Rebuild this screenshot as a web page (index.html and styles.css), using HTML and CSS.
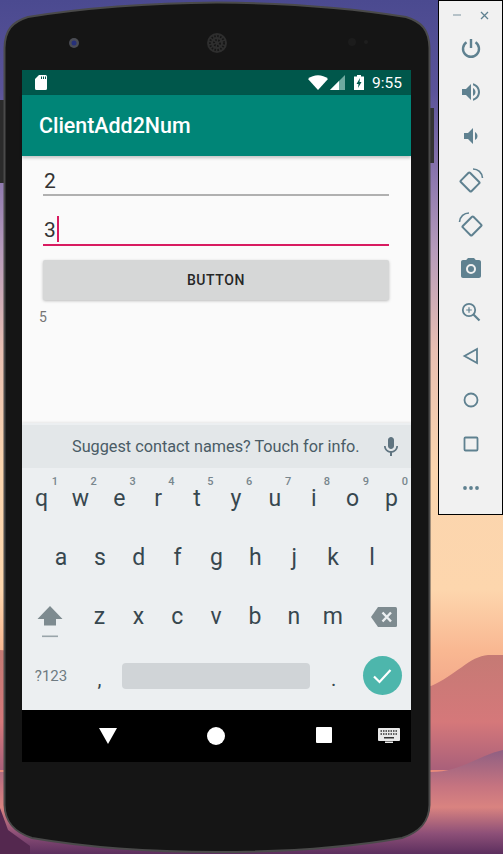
FILE: index.html
```html
<!DOCTYPE html>
<html lang="en">
<head>
    <meta charset="UTF-8">
    <meta name="viewport" content="width=device-width, initial-scale=1.0">
    <title>ClientAdd2Num</title>
    <link rel="stylesheet" href="styles.css">
</head>
<body>
    <div class="desktop">
        <!-- wallpaper hills -->
        <svg class="hills" width="503" height="854" viewBox="0 0 503 854">
            <defs>
                <linearGradient id="hillBack" x1="0" y1="0" x2="0" y2="1">
                    <stop offset="0" stop-color="#c47a74"/>
                    <stop offset="0.6" stop-color="#d5787a"/>
                    <stop offset="1" stop-color="#a9607a"/>
                </linearGradient>
                <linearGradient id="hillFront" x1="0" y1="0" x2="0" y2="1">
                    <stop offset="0" stop-color="#8f5f82"/>
                    <stop offset="0.35" stop-color="#c67480"/>
                    <stop offset="0.55" stop-color="#d98380"/>
                    <stop offset="0.8" stop-color="#8e5078"/>
                    <stop offset="1" stop-color="#5c2f5e"/>
                </linearGradient>
            </defs>
            <path d="M0 650 L0 770 L503 770 L503 655 L488 655 C470 656 455 676 431 686 Z" fill="url(#hillBack)"/>
            <path d="M0 772 L0 854 L503 854 L503 750 C480 755 460 772 431 772 Z" fill="url(#hillFront)"/>
            <path d="M0 808 L8 830 L30 846 L30 854 L0 854 Z" fill="#54284f"/>
        </svg>

        <!-- phone shell -->
        <div class="phone">
            <svg class="shell" width="440" height="854" viewBox="0 0 440 854">
                <rect x="0" y="100" width="6" height="83" fill="#2b2b2b"/>
                <rect x="428" y="108" width="6" height="55" fill="#333"/>
                <path d="M4.5 48 C5 30 12 22 28 17 C90 7 150 3 217 2.500 C285 3 345 7 406 17 C422 22 429 30 429.500 48 L429.500 805 C429 822 420 832 402 838 C345 848 285 852 217 852 C150 852 90 848 32 838 C14 832 5 822 4.500 805 Z" fill="#151515" stroke="#4a4a4a" stroke-width="2"/>
                <circle cx="74" cy="43" r="5" fill="#4a4c54"/>
                <circle cx="74" cy="43" r="2.500" fill="#26307a"/>
                <circle cx="217" cy="43" r="10" fill="#2e2e2e"/>
                <circle cx="217" cy="43" r="7" fill="none" stroke="#161616" stroke-width="2" stroke-dasharray="1.500 1.500"/>
                <circle cx="217" cy="43" r="3" fill="none" stroke="#161616" stroke-width="2" stroke-dasharray="1.500 1.500"/>
                <circle cx="352" cy="42" r="4" fill="#1c1c1c"/>
                <circle cx="366" cy="42" r="2" fill="#1e1e1e"/>
            </svg>

            <div class="screen">
                <div class="status-bar">
                    <svg class="sd-icon" width="12" height="15" viewBox="0 0 12 15">
                        <path d="M4 0 H10.500 A1.500 1.500 0 0 1 12 1.500 V13.500 A1.500 1.500 0 0 1 10.500 15 H1.500 A1.500 1.500 0 0 1 0 13.500 V4 Z M6 1.500 V4 H7 V1.500 Z M8 1.500 V4 H9 V1.500 Z M10 1.500 V4 H11 V1.500 Z" fill="#fff" fill-rule="evenodd"/>
                    </svg>
                    <div class="status-right">
                        <svg width="20" height="15" viewBox="0 0 20 15"><path d="M0 4 C5.500 -1 14.500 -1 20 4 L10 15 Z" fill="#fff"/></svg>
                        <svg class="signal" width="15" height="15" viewBox="0 0 15 15">
                            <path d="M15 0 V15 H0 Z" fill="#6fa9a0"/>
                            <path d="M9 6 V15 H0 Z" fill="#fff"/>
                        </svg>
                        <svg class="battery" width="10" height="15" viewBox="0 0 10 15">
                            <path d="M3 0 H7 V1.500 H10 V15 H0 V1.500 H3 Z" fill="#fff"/>
                            <path d="M6 3 L2.500 9 H4.500 L4 13 L7.500 7 H5.500 Z" fill="#00574b"/>
                        </svg>
                        <span class="clock">9:55</span>
                    </div>
                </div>
                <div class="app-bar">ClientAdd2Num</div>

                <div class="content">
                    <div class="field">2</div>
                    <div class="field field-active">3<span class="caret"></span></div>
                    <div class="btn">BUTTON</div>
                    <div class="result">5</div>
                </div>

                <div class="keyboard">
                    <div class="suggest">
                        <span class="suggest-text">Suggest contact names? Touch for info.</span>
                        <svg class="mic" width="24" height="24" viewBox="0 0 24 24">
                            <path d="M12 14c1.660 0 3-1.340 3-3V5c0-1.660-1.340-3-3-3S9 3.340 9 5v6c0 1.660 1.340 3 3 3zm5.300-3c0 3-2.540 5.100-5.300 5.100S6.700 14 6.700 11H5c0 3.410 2.720 6.230 6 6.720V21h2v-3.280c3.280-.480 6-3.300 6-6.720h-1.700z" fill="#5f7480"/>
                        </svg>
                    </div>
                    <div class="key-row key-row-top">
                        <div class="key"><sup class="hint">1</sup>q</div>
                        <div class="key"><sup class="hint">2</sup>w</div>
                        <div class="key"><sup class="hint">3</sup>e</div>
                        <div class="key"><sup class="hint">4</sup>r</div>
                        <div class="key"><sup class="hint">5</sup>t</div>
                        <div class="key"><sup class="hint">6</sup>y</div>
                        <div class="key"><sup class="hint">7</sup>u</div>
                        <div class="key"><sup class="hint">8</sup>i</div>
                        <div class="key"><sup class="hint">9</sup>o</div>
                        <div class="key"><sup class="hint">0</sup>p</div>
                    </div>
                    <div class="key-row key-row-mid">
                        <div class="key">a</div>
                        <div class="key">s</div>
                        <div class="key">d</div>
                        <div class="key">f</div>
                        <div class="key">g</div>
                        <div class="key">h</div>
                        <div class="key">j</div>
                        <div class="key">k</div>
                        <div class="key">l</div>
                    </div>
                    <div class="key-row">
                        <div class="key key-wide">
                            <svg class="shift-icon" width="26" height="32" viewBox="0 0 26 32">
                                <path d="M13 0 L25.500 13 H19 V19.500 H7 V13 H0.500 Z" fill="#7e8b90"/>
                                <rect x="5" y="29.500" width="16" height="1.600" fill="#9aa5aa"/>
                            </svg>
                        </div>
                        <div class="key">z</div>
                        <div class="key">x</div>
                        <div class="key">c</div>
                        <div class="key">v</div>
                        <div class="key">b</div>
                        <div class="key">n</div>
                        <div class="key">m</div>
                        <div class="key key-wide">
                            <svg class="del-icon" width="26" height="20" viewBox="0 0 26 20">
                                <path d="M7 0 H24.500 A1.500 1.500 0 0 1 26 1.500 V18.500 A1.500 1.500 0 0 1 24.500 20 H7 L0 10 Z" fill="#7e8b90"/>
                                <path d="M11.500 5.500 L20 14.500 M20 5.500 L11.500 14.500" stroke="#eceff1" stroke-width="2.400"/>
                            </svg>
                        </div>
                    </div>
                    <div class="key-row">
                        <div class="key key-wide key-symbols">?123</div>
                        <div class="key key-punct">,</div>
                        <div class="key-space"><div class="space-bar"></div></div>
                        <div class="key key-punct">.</div>
                        <div class="key key-wide">
                            <div class="done">
                                <svg width="20" height="16" viewBox="0 0 20 16"><path d="M2 8.500 L7.500 14 L18.500 2" fill="none" stroke="#fff" stroke-width="2.200"/></svg>
                            </div>
                        </div>
                    </div>
                </div>

                <div class="nav-bar">
                    <svg class="nav-back" width="18" height="16" viewBox="0 0 18 16"><path d="M0 0 H18 L9 16 Z" fill="#fff"/></svg>
                    <div class="nav-home"></div>
                    <div class="nav-recent"></div>
                    <svg class="nav-kbd" width="22" height="15" viewBox="0 0 22 15">
                        <rect width="22" height="13" rx="1" fill="#e8e8e8"/>
                        <path d="M2.500 3 H19.500 M2.500 6 H19.500" stroke="#333" stroke-width="1.400" stroke-dasharray="1.500 1"/>
                        <rect x="6" y="9" width="10" height="1.500" fill="#333"/>
                        <rect x="7" y="13.500" width="8" height="1.500" fill="#e8e8e8"/>
                    </svg>
                </div>
            </div>
        </div>

        <!-- emulator side toolbar -->
        <div class="toolbar">
            <div class="toolbar-head">
                <svg width="8" height="8" viewBox="0 0 8 8"><path d="M0 4 H8" stroke="#8fa3ad" stroke-width="1.200"/></svg>
                <svg width="9" height="9" viewBox="0 0 9 9"><path d="M1 1 L8 8 M8 1 L1 8" stroke="#5f8190" stroke-width="1.300"/></svg>
            </div>
            <div class="tool"><svg width="24" height="24" viewBox="0 0 24 24"><path d="M12 3 V12" stroke-width="2.400"/><path d="M7.500 6.200 A8 8 0 1 0 16.500 6.200" stroke-width="2.400"/></svg></div>
            <div class="tool"><svg width="24" height="24" viewBox="0 0 24 24"><path class="solid" d="M3 9v6h4l5 5V4L7 9H3zm13.500 3c0-1.770-1.020-3.290-2.500-4.030v8.050c1.480-.730 2.500-2.250 2.500-4.020zM14 3.230v2.060c2.890.860 5 3.540 5 6.710s-2.110 5.850-5 6.710v2.060c4.010-.910 7-4.490 7-8.770s-2.990-7.860-7-8.770z"/></svg></div>
            <div class="tool"><svg width="24" height="24" viewBox="0 0 24 24"><path class="solid" d="M18.500 12c0-1.770-1.020-3.290-2.500-4.030v8.050c1.480-.730 2.500-2.250 2.500-4.020zM5 9v6h4l5 5V4L9 9H5z"/></svg></div>
            <div class="tool"><svg width="26" height="26" viewBox="0 0 26 26"><rect x="5.500" y="7.500" width="13" height="15" rx="1" transform="rotate(-45 12 15)" stroke-width="2"/><path d="M15 2 C20 2 24 5.500 24.500 11" stroke-width="1.600"/></svg></div>
            <div class="tool"><svg width="26" height="26" viewBox="0 0 26 26"><rect x="7.500" y="7.500" width="13" height="15" rx="1" transform="rotate(45 14 15)" stroke-width="2"/><path d="M11 2 C6 2 2 5.500 1.500 11" stroke-width="1.600"/></svg></div>
            <div class="tool"><svg width="24" height="24" viewBox="0 0 24 24"><path class="solid" fill-rule="evenodd" d="M9 2 L7.200 4 H4 C2.900 4 2 4.900 2 6 V20 C2 21.100 2.900 22 4 22 H20 C21.100 22 22 21.100 22 20 V6 C22 4.900 21.100 4 20 4 H16.800 L15 2 Z M12 8 A5 5 0 1 1 12 18 A5 5 0 1 1 12 8 Z M12 10 A3 3 0 1 0 12 16 A3 3 0 1 0 12 10 Z"/></svg></div>
            <div class="tool"><svg width="24" height="24" viewBox="0 0 24 24"><circle cx="10" cy="10" r="6.200" stroke-width="1.800"/><path d="M14.500 14.500 L20.500 20.500" stroke-width="2.200"/><path d="M10 7.200 V12.800 M7.200 10 H12.800" stroke-width="1.200"/></svg></div>
            <div class="tool"><svg width="24" height="24" viewBox="0 0 24 24"><path d="M18 5 V19 L5.500 12 Z" stroke-width="1.800"/></svg></div>
            <div class="tool"><svg width="24" height="24" viewBox="0 0 24 24"><circle cx="12" cy="12" r="6.500" stroke-width="1.800"/></svg></div>
            <div class="tool"><svg width="24" height="24" viewBox="0 0 24 24"><rect x="5.500" y="5.500" width="13" height="13" rx="1" stroke-width="1.800"/></svg></div>
            <div class="tool"><svg width="24" height="24" viewBox="0 0 24 24"><circle class="solid" cx="6" cy="12" r="1.900"/><circle class="solid" cx="12" cy="12" r="1.900"/><circle class="solid" cx="18" cy="12" r="1.900"/></svg></div>
        </div>
    </div>
</body>
</html>
```

FILE: styles.css
```css
body {
    margin: 0;
    font-family: Roboto, "Liberation Sans", sans-serif;
}

.desktop {
    position: relative;
    width: 503px;
    height: 854px;
    overflow: hidden;
    background: linear-gradient(180deg, #4b4a90 0, #5a5399 90px, #8874ad 170px, #b69bbb 250px, #e8bfb2 350px, #fbd5ae 470px, #fdd6ad 590px, #f9b892 650px, #e88a7c 760px);
}

.hills {
    position: absolute;
    left: 0;
    top: 0;
}

/* phone */
.phone {
    position: absolute;
    left: 0;
    top: 0;
    width: 440px;
    height: 854px;
    padding: 70px 0 0 22px;
    box-sizing: border-box;
}

.shell {
    position: absolute;
    left: 0;
    top: 0;
}

.screen {
    position: relative;
    display: flex;
    flex-direction: column;
    width: 389px;
    height: 692px;
}

.status-bar {
    display: flex;
    align-items: center;
    justify-content: space-between;
    height: 25px;
    padding: 0 9px 0 13px;
    background-color: #00574b;
    flex-shrink: 0;
}

.status-right {
    display: flex;
    align-items: center;
}

.signal {
    margin-left: 2px;
}

.battery {
    margin-left: 9px;
}

.clock {
    margin-left: 8px;
    color: #fff;
    font-size: 15.500px;
}

.app-bar {
    position: relative;
    display: flex;
    align-items: center;
    height: 61px;
    padding-left: 17px;
    background-color: #008577;
    color: #fff;
    font-size: 21.400px;
    font-weight: 500;
    box-shadow: 0 2px 3px rgba(0, 0, 0, 0.22);
    flex-shrink: 0;
}

/* form */
.content {
    height: 267px;
    padding: 10px 22px 0 21px;
    background-color: #fafafa;
    box-sizing: border-box;
    flex-shrink: 0;
}

.field {
    display: flex;
    align-items: center;
    height: 26px;
    padding: 2px 0 0 1px;
    border-bottom: 2px solid #b0b0b0;
    color: #333;
    font-size: 21px;
}

.field-active {
    height: 28px;
    margin-top: 18px;
    border-bottom-color: #d81b60;
}

.caret {
    width: 2px;
    height: 26px;
    margin: -2px 0 0 1px;
    background-color: #d81b60;
}

.btn {
    display: flex;
    align-items: center;
    justify-content: center;
    height: 40px;
    margin-top: 14px;
    background-color: #d6d7d7;
    border-radius: 2px;
    box-shadow: 0 1px 3px rgba(0, 0, 0, 0.25);
    color: #262626;
    font-size: 14px;
    font-weight: 500;
    letter-spacing: 0.600px;
}

.result {
    margin: 9px 0 0 -4px;
    color: #757575;
    font-size: 14px;
    line-height: 17px;
}

/* keyboard */
.keyboard {
    height: 287px;
    padding-top: 2px;
    background-color: #eceff1;
    box-shadow: 0 -1px 2px rgba(0, 0, 0, 0.08);
    box-sizing: border-box;
    flex-shrink: 0;
}

.suggest {
    display: flex;
    align-items: center;
    height: 43px;
    background-color: #e3e7e9;
}

.suggest-text {
    margin-left: 50px;
    color: #4a5c66;
    font-size: 16.250px;
}

.mic {
    margin-left: 19px;
}

.key-row {
    display: flex;
    height: 59px;
}

.key-row-top {
    height: 60px;
}

.key-row-mid {
    padding-left: 19.500px;
}

.key {
    position: relative;
    display: flex;
    align-items: center;
    justify-content: center;
    width: 38.900px;
    color: #37474f;
    font-size: 23px;
    flex-shrink: 0;
}

.key-wide {
    width: 58px;
}

.shift-icon {
    margin: 10px 3px 0 0;
}

.del-icon {
    margin-left: 5px;
}

.hint {
    position: absolute;
    right: 3px;
    top: 8px;
    color: #78868d;
    font-size: 11px;
    font-weight: 500;
    line-height: 12px;
}

.key-symbols {
    color: #6f7b82;
    font-size: 15px;
}

.key-punct {
    font-size: 20px;
    padding-top: 6px;
    box-sizing: border-box;
}

.key-space {
    display: flex;
    align-items: center;
    justify-content: center;
    flex: 1;
}

.space-bar {
    width: 188px;
    height: 26px;
    margin-right: 2px;
    background-color: #d0d4d7;
    border-radius: 4px;
}

.done {
    display: flex;
    align-items: center;
    justify-content: center;
    width: 39px;
    height: 39px;
    background-color: #4db6ac;
    border-radius: 50%;
}

/* nav bar */
.nav-bar {
    position: relative;
    flex: 1;
    background-color: #000;
}

.nav-back,
.nav-home,
.nav-recent,
.nav-kbd {
    position: absolute;
}

.nav-back {
    left: 77px;
    top: 18px;
}

.nav-home {
    left: 185px;
    top: 17px;
    width: 18px;
    height: 18px;
    background-color: #fff;
    border-radius: 50%;
}

.nav-recent {
    left: 294px;
    top: 17px;
    width: 16px;
    height: 16px;
    background-color: #fff;
    border-radius: 1px;
}

.nav-kbd {
    left: 356px;
    top: 18px;
}

/* side toolbar */
.toolbar {
    position: absolute;
    left: 438px;
    top: 0;
    width: 65px;
    height: 515px;
    background-color: #f1f1f1;
    border: 1px solid #000;
    box-sizing: border-box;
}

.toolbar-head {
    display: flex;
    align-items: center;
    justify-content: space-between;
    height: 25px;
    padding: 3px 13px 0 14px;
    box-sizing: border-box;
}

.tool {
    display: flex;
    align-items: center;
    justify-content: center;
    height: 44px;
}

.tool svg {
    fill: none;
    stroke: #5f8190;
}

.tool svg .solid {
    fill: #5f8190;
    stroke: none;
}
```
